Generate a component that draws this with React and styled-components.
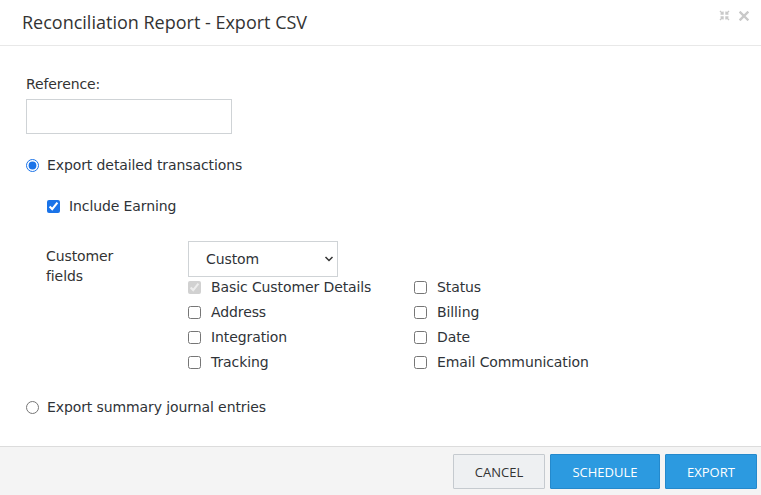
import styled, { createGlobalStyle } from "styled-components";

const Global = createGlobalStyle`
  html, body { margin: 0; padding: 0; background: #fff; }
  body { font-family: "DejaVu Sans", Verdana, sans-serif; color: #2f3338; }
`;

const Dialog = styled.div`
  width: 761px;
  height: 495px;
  display: flex;
  flex-direction: column;
  background: #fff;
`;

const Header = styled.div`
  height: 45px;
  border-bottom: 1px solid #e8e8e8;
  display: flex;
  align-items: center;
  justify-content: space-between;
  padding: 0 12px 0 22px;
`;

const Title = styled.h1`
  margin: 0;
  margin-top: -2px;
  font-family: "Open Sans", sans-serif;
  font-weight: normal;
  font-size: 18px;
  color: #333;
`;

const Tools = styled.div`
  display: flex;
  align-items: center;
  gap: 9px;
  margin-top: -14px;
  color: #c9c9c9;
`;

const Body = styled.div`
  flex: 1;
  padding: 28px 26px 0;
  font-size: 14px;
  line-height: 20px;
  letter-spacing: -0.1px;
`;

const Label = styled.div`
  color: #333;
`;

const TextInput = styled.input`
  display: block;
  box-sizing: border-box;
  margin-top: 5px;
  width: 206px;
  height: 35px;
  border: 1px solid #cfd3d6;
  outline: none;
`;

const OptionRow = styled.label`
  display: flex;
  align-items: center;
  gap: ${p => p.$gap || 8}px;
  margin-top: ${p => p.$top}px;
  padding-left: ${p => p.$indent || 0}px;
  color: #2f3338;
  input {
    margin: 0;
    width: 13px;
    height: 13px;
    accent-color: #1a73e8;
  }
`;

const FieldsSection = styled.div`
  display: flex;
  margin-top: 25px;
  padding-left: 20px;
`;

const FieldsLabel = styled.div`
  width: 142px;
  padding-top: 5px;
  color: #333;
`;

const SelectWrap = styled.div`
  position: relative;
  width: 150px;
`;

const Select = styled.select`
  appearance: none;
  box-sizing: border-box;
  width: 150px;
  height: 36px;
  border: 1px solid #cfd3d6;
  background: #fff;
  padding: 0 0 0 17px;
  font-family: "DejaVu Sans", sans-serif;
  font-size: 14px;
  letter-spacing: -0.1px;
  color: #2f3338;
  outline: none;
`;

const Chevron = styled.svg`
  position: absolute;
  right: 4px;
  top: 14px;
  pointer-events: none;
`;

const FieldGrid = styled.div`
  display: grid;
  grid-template-columns: 226px auto;
  grid-auto-flow: column;
  grid-template-rows: repeat(4, 20px);
  row-gap: 5px;
`;

const Check = styled.label`
  display: flex;
  align-items: center;
  gap: 10px;
  white-space: nowrap;
  input {
    margin: 0;
    width: 13px;
    height: 13px;
    accent-color: #1a73e8;
  }
`;

const Footer = styled.div`
  box-sizing: border-box;
  height: 49px;
  border-top: 1px solid #dcdcdc;
  background: #f4f4f4;
  display: flex;
  justify-content: flex-end;
  align-items: flex-start;
  gap: 5px;
  padding: 7px 4px 0 0;
`;

const Button = styled.button`
  box-sizing: border-box;
  height: 35px;
  padding: 0;
  width: ${p => p.$w}px;
  font-family: "Open Sans", sans-serif;
  font-size: 13px;
  border-radius: 1px;
  border: 1px solid ${p => (p.$primary ? "#2489cc" : "#c5cacf")};
  background: ${p => (p.$primary ? "#2c9ae0" : "#eef0f2")};
  color: ${p => (p.$primary ? "#fff" : "#333")};
  cursor: pointer;
`;

const fields = [
  ["Basic Customer Details", true, true],
  ["Address"],
  ["Integration"],
  ["Tracking"],
  ["Status"],
  ["Billing"],
  ["Date"],
  ["Email Communication"],
];

export default function App() {
  return (
    <Dialog>
      <Global />
      <Header>
        <Title>Reconciliation Report - Export CSV</Title>
        <Tools>
          <svg width="11" height="11" viewBox="0 0 11 11" fill="none" stroke="currentColor" strokeWidth="1.4">
            <path d="M1 1l3 3M4 1.5v2.5H1.5M10 1l-3 3M7 1.5v2.5h2.5M1 10l3-3M4 9.5V7H1.5M10 10L7 7M7 9.5V7h2.5" />
          </svg>
          <svg width="10" height="10" viewBox="0 0 10 10" stroke="currentColor" strokeWidth="2.4" strokeLinecap="square">
            <path d="M1.5 1.5l7 7M8.5 1.5l-7 7" />
          </svg>
        </Tools>
      </Header>
      <Body>
        <Label>Reference:</Label>
        <TextInput type="text" />
        <OptionRow $top={21}>
          <input type="radio" name="mode" defaultChecked />
          Export detailed transactions
        </OptionRow>
        <OptionRow $top={21} $indent={21} $gap={9}>
          <input type="checkbox" defaultChecked />
          Include Earning
        </OptionRow>
        <FieldsSection>
          <FieldsLabel>
            Customer
            <br />
            fields
          </FieldsLabel>
          <div>
            <SelectWrap>
              <Select defaultValue="custom">
                <option value="custom">Custom</option>
                <option value="all">All</option>
              </Select>
              <Chevron width="10" height="8" viewBox="0 0 10 8" fill="none" stroke="#333" strokeWidth="1.5">
                <path d="M1.5 2l3.5 3.5L8.5 2" />
              </Chevron>
            </SelectWrap>
            <FieldGrid>
              {fields.map(([name, checked, disabled]) => (
                <Check key={name}>
                  <input type="checkbox" defaultChecked={checked} disabled={disabled} />
                  {name}
                </Check>
              ))}
            </FieldGrid>
          </div>
        </FieldsSection>
        <OptionRow $top={25}>
          <input type="radio" name="mode" />
          Export summary journal entries
        </OptionRow>
      </Body>
      <Footer>
        <Button $w={92}>CANCEL</Button>
        <Button $primary $w={110}>SCHEDULE</Button>
        <Button $primary $w={92}>EXPORT</Button>
      </Footer>
    </Dialog>
  );
}
